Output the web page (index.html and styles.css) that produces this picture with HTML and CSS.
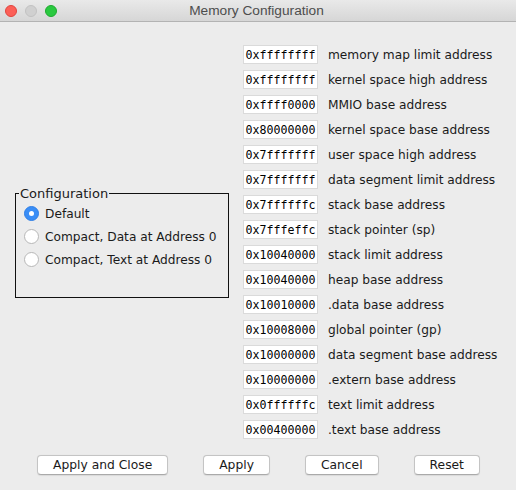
FILE: index.html
```html
<!DOCTYPE html>
<html>
<head>
<meta charset="utf-8">
<link rel="stylesheet" href="styles.css">
</head>
<body>
<div class="window">
  <div class="titlebar">
    <div class="lights">
      <span class="light red"></span>
      <span class="light gray"></span>
      <span class="light green"></span>
    </div>
    <div class="title">Memory Configuration</div>
  </div>
  <div class="content">
    <fieldset class="config">
      <legend>Configuration</legend>
      <label class="radio"><span class="dot checked"></span>Default</label>
      <label class="radio"><span class="dot"></span>Compact, Data at Address 0</label>
      <label class="radio"><span class="dot"></span>Compact, Text at Address 0</label>
    </fieldset>
    <div class="table">
      <div class="row"><span class="val">0xffffffff</span><span class="lbl">memory map limit address</span></div>
      <div class="row"><span class="val">0xffffffff</span><span class="lbl">kernel space high address</span></div>
      <div class="row"><span class="val">0xffff0000</span><span class="lbl">MMIO base address</span></div>
      <div class="row"><span class="val">0x80000000</span><span class="lbl">kernel space base address</span></div>
      <div class="row"><span class="val">0x7fffffff</span><span class="lbl">user space high address</span></div>
      <div class="row"><span class="val">0x7fffffff</span><span class="lbl">data segment limit address</span></div>
      <div class="row"><span class="val">0x7ffffffc</span><span class="lbl">stack base address</span></div>
      <div class="row"><span class="val">0x7fffeffc</span><span class="lbl">stack pointer (sp)</span></div>
      <div class="row"><span class="val">0x10040000</span><span class="lbl">stack limit address</span></div>
      <div class="row"><span class="val">0x10040000</span><span class="lbl">heap base address</span></div>
      <div class="row"><span class="val">0x10010000</span><span class="lbl">.data base address</span></div>
      <div class="row"><span class="val">0x10008000</span><span class="lbl">global pointer (gp)</span></div>
      <div class="row"><span class="val">0x10000000</span><span class="lbl">data segment base address</span></div>
      <div class="row"><span class="val">0x10000000</span><span class="lbl">.extern base address</span></div>
      <div class="row"><span class="val">0x0ffffffc</span><span class="lbl">text limit address</span></div>
      <div class="row"><span class="val">0x00400000</span><span class="lbl">.text base address</span></div>
    </div>
  </div>
  <div class="buttons">
    <button class="btn">Apply and Close</button>
    <button class="btn">Apply</button>
    <button class="btn">Cancel</button>
    <button class="btn">Reset</button>
  </div>
</div>
</body>
</html>
```
FILE: styles.css
```css
html, body {
  margin: 0;
  padding: 0;
}
body {
  font-family: "DejaVu Sans", "Liberation Sans", sans-serif;
  font-size: 12px;
  color: #1a1a1a;
  background: #ececec;
}
.window {
  width: 516px;
  height: 490px;
  background: #ececec;
  display: flex;
  flex-direction: column;
}
.titlebar {
  height: 21px;
  border-bottom: 1px solid #b3b3b3;
  background: linear-gradient(#e9e9e9, #d6d6d6);
  display: flex;
  align-items: center;
}
.lights {
  display: flex;
  gap: 8px;
  padding-left: 5px;
}
.light {
  width: 12px;
  height: 12px;
  border-radius: 50%;
  box-sizing: border-box;
}
.red { background: #fc5f57; border: 1px solid #e0443e; }
.gray { background: #d0d0d0; border: 1px solid #c2c2c2; }
.green { background: #2ac940; border: 1px solid #1eaa2f; }
.title {
  flex: 1;
  text-align: center;
  margin-right: 62px;
  padding-left: 2px;
  font-size: 13.7px;
  color: #4d4d4d;
  font-family: "Liberation Sans", "DejaVu Sans", sans-serif;
}
.content {
  display: flex;
  align-items: center;
  padding-top: 23px;
  padding-left: 15px;
}
.config {
  margin: 0;
  width: 214px;
  box-sizing: border-box;
  border: 1px solid #111;
  padding: 1px 8px 26px 8px;
}
.config legend {
  padding: 0 1px;
  margin-left: -5px;
  font-size: 13px;
  color: #1a1a1a;
}
.radio {
  display: flex;
  align-items: center;
  height: 23px;
  font-size: 12.2px;
  white-space: nowrap;
  color: #1a1a1a;
}
.dot {
  width: 15px;
  height: 15px;
  flex: none;
  box-sizing: border-box;
  border-radius: 50%;
  background: #fff;
  border: 1px solid #b7b7b7;
  margin-right: 6px;
  position: relative;
}
.dot.checked {
  background: #3a8ef6;
  border-color: #2f7fe6;
}
.dot.checked::after {
  content: "";
  position: absolute;
  left: 4px;
  top: 4px;
  width: 5px;
  height: 5px;
  border-radius: 50%;
  background: #fff;
}
.table {
  margin-left: 14px;
  display: flex;
  flex-direction: column;
  gap: 6px;
}
.row {
  display: flex;
  align-items: center;
  height: 19px;
}
.val {
  width: 75px;
  height: 19px;
  box-sizing: border-box;
  border: 1px solid #dadada;
  background: #fff;
  font-family: "DejaVu Sans Mono", "Liberation Mono", monospace;
  font-size: 11.6px;
  color: #000;
  display: flex;
  align-items: center;
  justify-content: center;
}
.lbl {
  margin-left: 10px;
  font-size: 12.2px;
  white-space: nowrap;
  color: #1a1a1a;
}
.buttons {
  display: flex;
  justify-content: center;
  gap: 35px;
  margin-top: 16px;
  padding-left: 1px;
}
.btn {
  height: 20px;
  padding: 0 15px;
  background: #fff;
  border: 1px solid #c4c4c4;
  border-bottom-color: #aaa;
  border-radius: 4px;
  font-family: "DejaVu Sans", "Liberation Sans", sans-serif;
  font-size: 12.3px;
  color: #1a1a1a;
  box-shadow: 0 0.5px 1px rgba(0,0,0,0.08);
}
```
